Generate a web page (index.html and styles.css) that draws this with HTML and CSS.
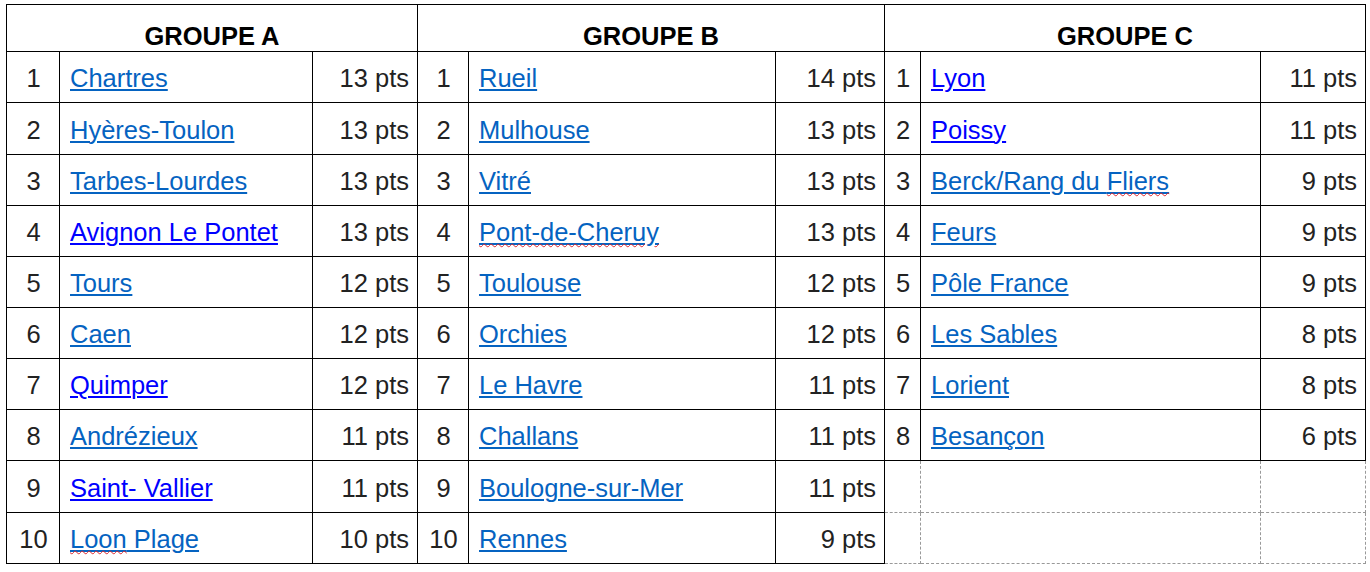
FILE: index.html
```html
<!DOCTYPE html>
<html lang="fr">
<head>
<meta charset="utf-8">
<title>Classement</title>
<link rel="stylesheet" href="styles.css">
</head>
<body>
<table class="standings">
  <colgroup>
    <col class="c-a1"><col class="c-a2"><col class="c-a3">
    <col class="c-b1"><col class="c-b2"><col class="c-b3">
    <col class="c-c1"><col class="c-c2"><col class="c-c3">
  </colgroup>
  <thead>
    <tr class="head">
      <th colspan="3">GROUPE A</th>
      <th colspan="3">GROUPE B</th>
      <th colspan="3">GROUPE C</th>
    </tr>
  </thead>
  <tbody>
    <tr>
      <td class="num">1</td><td class="name"><a href="#" class="lk">Chartres</a></td><td class="pts">13 pts</td>
      <td class="num">1</td><td class="name"><a href="#" class="lk">Rueil</a></td><td class="pts">14 pts</td>
      <td class="num">1</td><td class="name"><a href="#" class="lk pure">Lyon</a></td><td class="pts">11 pts</td>
    </tr>
    <tr>
      <td class="num">2</td><td class="name"><a href="#" class="lk">Hyères-Toulon</a></td><td class="pts">13 pts</td>
      <td class="num">2</td><td class="name"><a href="#" class="lk">Mulhouse</a></td><td class="pts">13 pts</td>
      <td class="num">2</td><td class="name"><a href="#" class="lk pure">Poissy</a></td><td class="pts">11 pts</td>
    </tr>
    <tr>
      <td class="num">3</td><td class="name"><a href="#" class="lk">Tarbes-Lourdes</a></td><td class="pts">13 pts</td>
      <td class="num">3</td><td class="name"><a href="#" class="lk">Vitré</a></td><td class="pts">13 pts</td>
      <td class="num">3</td><td class="name"><a href="#" class="lk">Berck/Rang du <span class="err">Fliers</span></a></td><td class="pts">9 pts</td>
    </tr>
    <tr>
      <td class="num">4</td><td class="name"><a href="#" class="lk pure">Avignon Le Pontet</a></td><td class="pts">13 pts</td>
      <td class="num">4</td><td class="name"><a href="#" class="lk"><span class="err">Pont-de-Cheruy</span></a></td><td class="pts">13 pts</td>
      <td class="num">4</td><td class="name"><a href="#" class="lk">Feurs</a></td><td class="pts">9 pts</td>
    </tr>
    <tr>
      <td class="num">5</td><td class="name"><a href="#" class="lk">Tours</a></td><td class="pts">12 pts</td>
      <td class="num">5</td><td class="name"><a href="#" class="lk">Toulouse</a></td><td class="pts">12 pts</td>
      <td class="num">5</td><td class="name"><a href="#" class="lk">Pôle France</a></td><td class="pts">9 pts</td>
    </tr>
    <tr>
      <td class="num">6</td><td class="name"><a href="#" class="lk">Caen</a></td><td class="pts">12 pts</td>
      <td class="num">6</td><td class="name"><a href="#" class="lk">Orchies</a></td><td class="pts">12 pts</td>
      <td class="num">6</td><td class="name"><a href="#" class="lk">Les Sables</a></td><td class="pts">8 pts</td>
    </tr>
    <tr>
      <td class="num">7</td><td class="name"><a href="#" class="lk pure">Quimper</a></td><td class="pts">12 pts</td>
      <td class="num">7</td><td class="name"><a href="#" class="lk">Le Havre</a></td><td class="pts">11 pts</td>
      <td class="num">7</td><td class="name"><a href="#" class="lk">Lorient</a></td><td class="pts">8 pts</td>
    </tr>
    <tr>
      <td class="num">8</td><td class="name"><a href="#" class="lk">Andrézieux</a></td><td class="pts">11 pts</td>
      <td class="num">8</td><td class="name"><a href="#" class="lk">Challans</a></td><td class="pts">11 pts</td>
      <td class="num">8</td><td class="name"><a href="#" class="lk">Besançon</a></td><td class="pts">6 pts</td>
    </tr>
    <tr>
      <td class="num">9</td><td class="name"><a href="#" class="lk pure">Saint- Vallier</a></td><td class="pts">11 pts</td>
      <td class="num">9</td><td class="name"><a href="#" class="lk">Boulogne-sur-Mer</a></td><td class="pts">11 pts</td>
      <td class="empty"></td><td class="empty"></td><td class="empty"></td>
    </tr>
    <tr>
      <td class="num">10</td><td class="name"><a href="#" class="lk"><span class="err">Loon</span> Plage</a></td><td class="pts">10 pts</td>
      <td class="num">10</td><td class="name"><a href="#" class="lk">Rennes</a></td><td class="pts">9 pts</td>
      <td class="empty"></td><td class="empty"></td><td class="empty"></td>
    </tr>
  </tbody>
</table>
</body>
</html>
```

FILE: styles.css
```css
html, body {
  margin: 0;
  padding: 0;
  background: #ffffff;
}

body {
  padding: 4px 0 0 6px;
  font-family: "Liberation Sans", Arial, sans-serif;
  font-size: 25.5px;
  color: #222222;
}

.standings {
  border-collapse: collapse;
  table-layout: fixed;
  width: 1360px;
}

.c-a1 { width: 53px; }
.c-a2 { width: 253px; }
.c-a3 { width: 105px; }
.c-b1 { width: 51px; }
.c-b2 { width: 307px; }
.c-b3 { width: 109px; }
.c-c1 { width: 36px; }
.c-c2 { width: 340px; }
.c-c3 { width: 105px; }

.standings th,
.standings td {
  border: 1px solid #000000;
  padding: 0;
  line-height: 28px;
  white-space: nowrap;
}

.head {
  height: 47px;
}

.standings .head th {
  font-size: 25.5px;
  font-weight: bold;
  color: #000000;
  text-align: center;
  vertical-align: bottom;
  padding-bottom: 1px;
}

.standings tbody tr {
  height: 51px;
}

.standings tbody tr:nth-child(2),
.standings tbody tr:nth-child(9) {
  height: 52px;
}

.standings td {
  vertical-align: middle;
  padding-top: 2px;
}

.standings td.num {
  text-align: center;
  padding-left: 1px;
}

.standings td.name {
  padding-left: 10px;
}

.standings td.pts {
  text-align: right;
  padding-right: 8px;
}

.lk {
  color: #0563c1;
  text-decoration: underline;
  text-decoration-thickness: 2px;
  text-underline-offset: 2px;
}

.lk.pure {
  color: #0000ff;
}

.err {
  text-decoration: underline wavy #e0282d;
  text-decoration-thickness: 1px;
  text-underline-offset: 2px;
}

.standings td.empty {
  border: 1px dashed #999999;
}
```
